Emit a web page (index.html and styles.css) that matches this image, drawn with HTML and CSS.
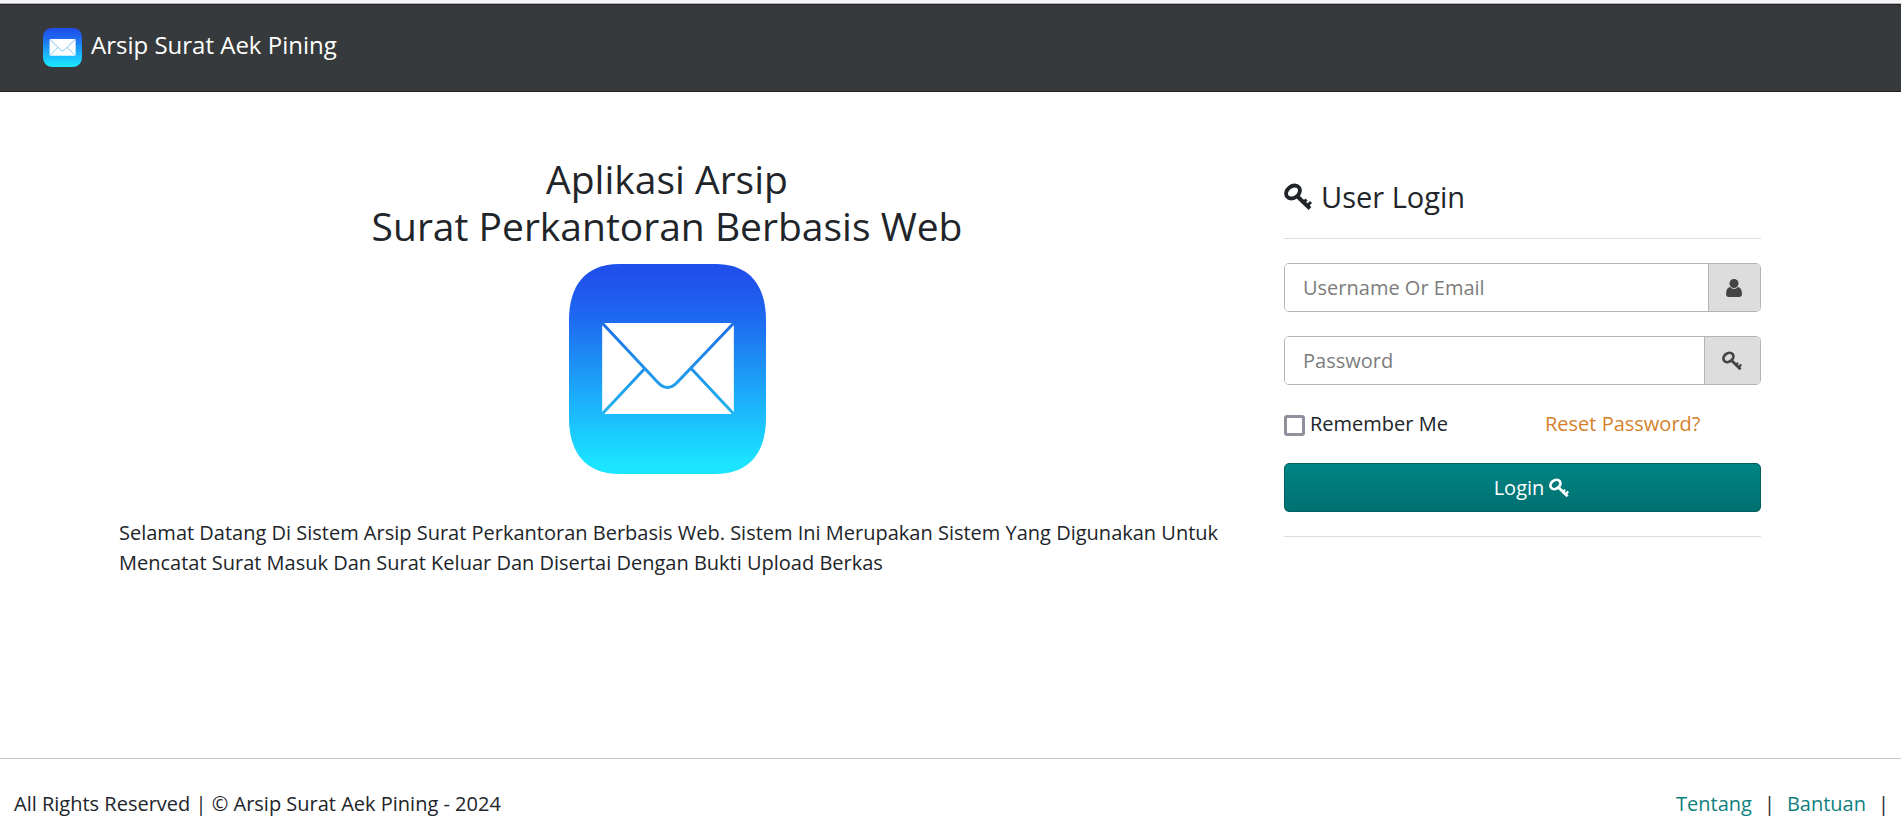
FILE: index.html
```
<!DOCTYPE html>
<html lang="id">
<head>
  <meta charset="UTF-8" />
  <meta name="viewport" content="width=device-width, initial-scale=1.0"/>
  <title>Arsip Surat Aek Pining</title>
  <link rel="stylesheet" href="styles.css">
</head>
<body>

  <!-- shared icons -->
  <svg class="sprite" aria-hidden="true">
    <defs>
      <linearGradient id="mail-bg" x1="0" y1="0" x2="0" y2="1">
        <stop offset="0.05" stop-color="#1f50ec"/>
        <stop offset="0.25" stop-color="#1e68f0"/>
        <stop offset="0.65" stop-color="#1cb0fa"/>
        <stop offset="0.95" stop-color="#1ae4ff"/>
      </linearGradient>
      <linearGradient id="mail-line" gradientUnits="userSpaceOnUse" x1="0" y1="60" x2="0" y2="150">
        <stop offset="0" stop-color="#2070e6"/>
        <stop offset="1" stop-color="#22b4ee"/>
      </linearGradient>
    </defs>
    <symbol id="mail" viewBox="0 0 196 210" preserveAspectRatio="none">
      <path fill="url(#mail-bg)" d="M50 0H146C180 0 196 22 196 56V154C196 188 180 210 146 210H50C16 210 0 188 0 154V56C0 22 16 0 50 0Z"/>
      <rect x="33" y="59" width="131" height="91" rx="2" fill="#fff"/>
      <path fill="none" stroke="url(#mail-line)" stroke-width="3" d="M33 59L88 118Q98 129 108 118L164 59M33 150L75 105M164 150L122 105"/>
    </symbol>
    <symbol id="key" viewBox="0 0 28 28">
      <g fill="none" stroke="currentColor">
        <ellipse cx="9" cy="9" rx="7.500" ry="5.800" transform="rotate(-38 9 9)" stroke-width="3.800"/>
        <path stroke-width="4" d="M13 13L26 25.500"/>
        <path stroke-width="3" d="M19.500 19.500L22.500 16.500M23.500 22.500L27 19"/>
      </g>
    </symbol>
    <symbol id="user" viewBox="0 0 16 18">
      <circle cx="8" cy="4.500" r="4.500" fill="currentColor"/>
      <path fill="currentColor" d="M4 8Q8 12 12 8Q16 9 16 15Q16 18 13 18H3Q0 18 0 15Q0 9 4 8Z"/>
    </symbol>
  </svg>

  <header class="navbar">
    <a class="brand" href="#">
      <svg class="brand-logo" aria-hidden="true"><use href="#mail"/></svg>
      <span>Arsip Surat Aek Pining</span>
    </a>
  </header>

  <main class="content">
    <section class="intro">
      <h1>Aplikasi Arsip<br>Surat Perkantoran Berbasis Web</h1>
      <svg class="intro-logo" aria-hidden="true"><use href="#mail"/></svg>
      <p>Selamat Datang Di Sistem Arsip Surat Perkantoran Berbasis Web. Sistem Ini Merupakan Sistem Yang Digunakan Untuk Mencatat Surat Masuk Dan Surat Keluar Dan Disertai Dengan Bukti Upload Berkas</p>
    </section>

    <section class="login">
      <h2><svg class="icon-lg" aria-hidden="true"><use href="#key"/></svg> User Login</h2>
      <hr>
      <form>
        <div class="input-group">
          <input type="text" id="username" placeholder="Username Or Email" aria-label="Username Or Email">
          <label class="addon" for="username"><svg class="icon-user" aria-hidden="true"><use href="#user"/></svg></label>
        </div>
        <div class="input-group">
          <input type="password" id="password" placeholder="Password" aria-label="Password">
          <label class="addon" for="password"><svg class="icon" aria-hidden="true"><use href="#key"/></svg></label>
        </div>
        <div class="options">
          <label class="remember"><input type="checkbox" id="remember"> Remember Me</label>
          <a class="reset" href="#">Reset Password?</a>
        </div>
        <button class="btn-login" type="submit">Login <svg class="icon" aria-hidden="true"><use href="#key"/></svg></button>
      </form>
      <hr>
    </section>
  </main>

  <footer class="footer">
    <div>All Rights Reserved | © Arsip Surat Aek Pining - 2024</div>
    <nav class="footer-links">
      <a href="#">Tentang</a> <span>|</span>
      <a href="#">Bantuan</a> <span>|</span>
    </nav>
  </footer>

</body>
</html>
```
FILE: styles.css
```
* {
  box-sizing: border-box;
}
body {
  margin: 0;
  min-height: 100vh;
  display: flex;
  flex-direction: column;
  font-family: "Open Sans", sans-serif;
  font-size: 20px;
  line-height: 30px;
  color: #212529;
  background: #fff;
  border-top: 3px solid #f4f4f6;
}
.sprite {
  position: absolute;
  width: 0;
  height: 0;
}
a {
  text-decoration: none;
}
.navbar {
  display: flex;
  align-items: center;
  height: 89px;
  padding: 0 43px;
  background: #373a3c;
  border-top: 1px solid #b4b4b4;
  border-bottom: 1px solid #222;
  box-shadow: inset 0 1px #222;
}
.brand {
  display: flex;
  align-items: center;
  gap: 9px;
  color: #fff;
  font-size: 24px;
}
.brand span {
  padding-bottom: 5px;
}
.brand-logo {
  width: 39px;
  height: 39px;
}
.content {
  flex: 1;
  display: grid;
  grid-template-columns: 1096fr 477fr;
  gap: 69px;
  padding: 63px 140px 48px 119px;
}
.intro {
  text-align: center;
}
h1 {
  margin: 0 0 15px;
  font-size: 39px;
  font-weight: 400;
  line-height: 47px;
}
.intro-logo {
  display: block;
  width: 197px;
  height: 210px;
  margin: 0 auto 44px;
}
.intro p {
  margin: 0 -24px 0 0;
  text-align: left;
}
.login {
  padding-top: 25px;
}
h2 {
  display: flex;
  align-items: center;
  gap: 9px;
  margin: 0;
  font-size: 29px;
  font-weight: 400;
  line-height: 34px;
}
hr {
  height: 1px;
  margin: 24px 0;
  border: 0;
  background: #dedede;
}
.icon-lg {
  width: 28px;
  height: 28px;
}
.icon {
  width: 20px;
  height: 20px;
}
.icon-user {
  width: 16px;
  height: 18px;
}
.input-group {
  display: flex;
  height: 49px;
  margin-bottom: 24px;
  border: 1px solid #b4b4b4;
  border-radius: 5px;
  overflow: hidden;
}
.input-group input {
  flex: 1;
  min-width: 0;
  padding: 0 18px;
  border: 0;
  outline: 0;
  background: #fff;
  color: #495057;
  font: inherit;
}
.input-group input::placeholder {
  color: #7c7c7c;
  opacity: 1;
}
.addon {
  display: flex;
  align-items: center;
  padding: 0 18px 0 17px;
  background: #ddd;
  border-left: 1px solid #b4b4b4;
  color: #444;
}
.options {
  display: grid;
  grid-template-columns: 261fr 216fr;
  margin-bottom: 24px;
}
.remember {
  display: flex;
  align-items: center;
  gap: 5px;
}
.remember input {
  appearance: none;
  width: 21px;
  height: 21px;
  margin: 3px 0 0;
  border: 3px solid #8f8f9d;
  border-radius: 3px;
  background: #fff;
}
.reset {
  color: #d5812a;
}
.btn-login {
  display: flex;
  align-items: center;
  justify-content: center;
  gap: 5px;
  width: 100%;
  height: 49px;
  padding: 0 0 0 18px;
  border: 1px solid #006060;
  border-radius: 5px;
  background: linear-gradient(#008484, #007070);
  color: #fff;
  font: inherit;
  cursor: pointer;
}
.footer {
  display: flex;
  justify-content: space-between;
  padding: 30px 12px 18px 14px;
  border-top: 1px solid #c8c8c8;
}
.footer-links {
  display: flex;
  gap: 12px;
}
.footer-links a {
  color: #0f7f7f;
}
```
